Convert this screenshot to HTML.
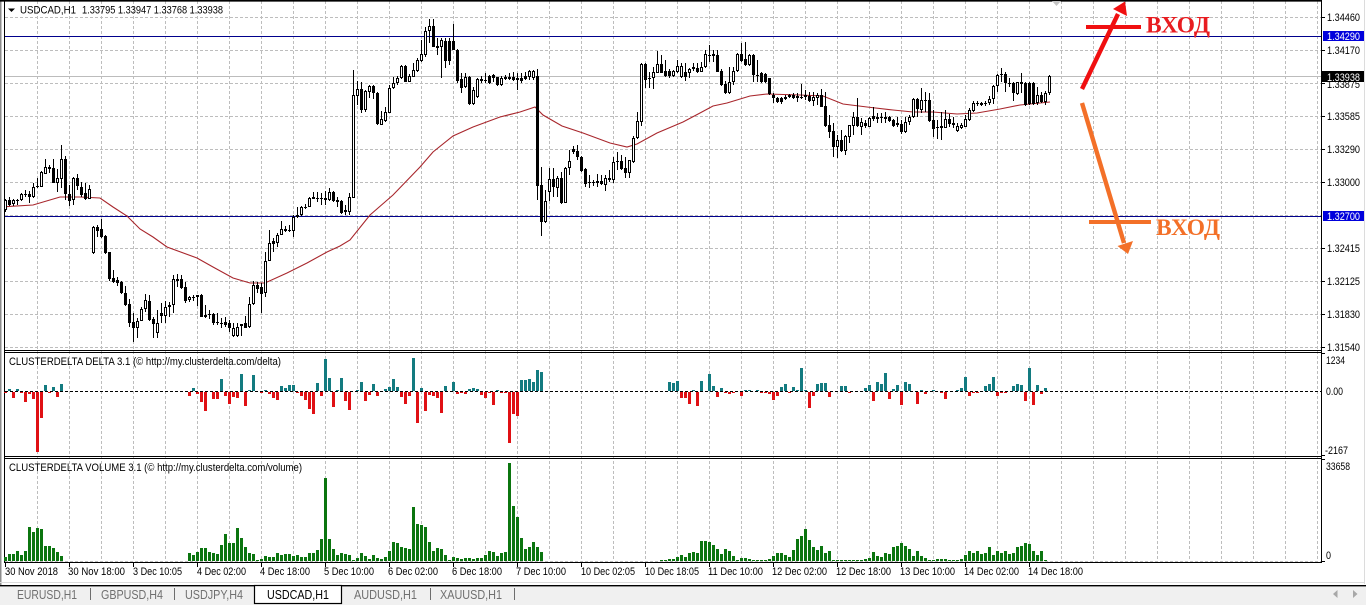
<!DOCTYPE html>
<html lang="en"><head><meta charset="utf-8"><title>USDCAD,H1</title>
<style>
html,body{margin:0;padding:0;background:#fff;width:1366px;height:607px;overflow:hidden}
svg{display:block}
text{font-family:"Liberation Sans",sans-serif;font-size:11px;fill:#000}
.t{font-size:12.5px;fill:#707070}
.v{font-family:"Liberation Serif",serif;font-weight:bold;font-size:23px}
</style></head><body>
<svg xmlns="http://www.w3.org/2000/svg" width="1366" height="607" viewBox="0 0 1366 607">
<rect width="1366" height="607" fill="#fff"/>
<!-- window edge -->
<rect x="0" y="0" width="1.5" height="586" fill="#8c8c8c"/>
<rect x="1364" y="0" width="1" height="584" fill="#dcdcdc"/>
<!-- grid -->
<g fill="none" stroke="#bdbdbd" stroke-width="1" stroke-dasharray="3 2">
<path d="M5 17.5H1321M5 50.5H1321M5 83.5H1321M5 116.5H1321M5 149.5H1321M5 182.5H1321M5 215.5H1321M5 248.5H1321M5 281.5H1321M5 314.5H1321M5 347.5H1321M5 561.5H1321"/>
<path d="M37.5 1V561M69.5 1V561M101.5 1V561M133.5 1V561M165.5 1V561M197.5 1V561M229.5 1V561M261.5 1V561M293.5 1V561M325.5 1V561M357.5 1V561M389.5 1V561M421.5 1V561M453.5 1V561M485.5 1V561M517.5 1V561M549.5 1V561M581.5 1V561M613.5 1V561M645.5 1V561M677.5 1V561M709.5 1V561M741.5 1V561M773.5 1V561M805.5 1V561M837.5 1V561M869.5 1V561M901.5 1V561M933.5 1V561M965.5 1V561M997.5 1V561M1029.5 1V561M1061.5 1V561M1093.5 1V561M1125.5 1V561M1157.5 1V561M1189.5 1V561M1221.5 1V561M1253.5 1V561M1285.5 1V561M1317.5 1V561"/>
</g>
<!-- price level lines -->
<path d="M5 76.5H1321" stroke="#bcbcbc" fill="none"/>
<path d="M5 36.5H1322M5 216.5H1322" stroke="#00008c" fill="none"/>
<!-- moving average -->
<path fill="none" stroke="#a8262c" stroke-width="1.1" d="M5 206.7L33 205L60 197L80 197L100 198L113 207L127 216L140 229L153 237L167 247L197 258L213 267L233 278L250 283L265 283L287 273L307 263L327 252L340 246L350 240L370 215L393 195L420 167L433 152L453 136L473 127L500 117L520 112L535 107L543 115L562 126L583 133L610 143L627 147L637 144L657 133L683 122L700 113L713 106L727 103L750 96L767 94L800 95L823 96L843 104L867 107L893 110L913 112L933 112L957 114L977 113L1000 109L1020 105L1050 102"/>
<!-- candle wicks -->
<path fill="none" stroke="#000" stroke-width="1" d="M5.5 199V212M9.5 197V206M13.5 199V206M17.5 199V205M21.5 193V201M25.5 190V197M29.5 191V203M33.5 183V198M37.5 178V188M41.5 171V187M45.5 159V174M49.5 165V173M53.5 159V183M57.5 169V192M61.5 145V188M65.5 156V200M69.5 185V206M73.5 177V205M77.5 174V190M81.5 182V197M85.5 183V200M89.5 185V199M93.5 226V254M97.5 225V237M101.5 219V238M105.5 235V254M109.5 252V281M113.5 270V283M117.5 277V286M121.5 281V294M125.5 286V306M129.5 299V327M133.5 313V342M137.5 318V338M141.5 307V321M145.5 294V312M149.5 295V321M153.5 317V338M157.5 310V338M161.5 303V323M165.5 301V323M169.5 302V317M173.5 275V313M177.5 274V287M181.5 275V289M185.5 282V303M189.5 296V302M193.5 295V301M197.5 295V306M201.5 294V317M205.5 305V318M209.5 310V319M213.5 313V325M217.5 313V325M221.5 318V328M225.5 317V327M229.5 320V332M233.5 323V337M237.5 323V337M241.5 324V336M245.5 316V328M249.5 297V328M253.5 281V305M257.5 282V293M261.5 283V313M265.5 252V297M269.5 230V261M273.5 238V252M277.5 233V247M281.5 221V235M285.5 226V232M289.5 225V232M293.5 215V237M297.5 207V218M301.5 206V216M305.5 204V209M309.5 197V207M313.5 192V199M317.5 192V202M321.5 193V205M325.5 191V205M329.5 188V201M333.5 191V202M337.5 197V207M341.5 200V214M345.5 205V215M349.5 193V215M353.5 70V198M357.5 81V105M361.5 82V113M365.5 90V112M369.5 85V98M373.5 85V99M377.5 92V125M381.5 111V125M385.5 107V122M389.5 85V113M393.5 77V89M397.5 76V85M401.5 65V79M405.5 65V82M409.5 74V82M413.5 63V77M417.5 58V72M421.5 40V62M425.5 27V57M429.5 19V43M433.5 19V47M437.5 38V55M441.5 38V78M445.5 38V68M449.5 38V65M453.5 24V50M457.5 49V83M461.5 73V93M465.5 73V88M469.5 76V105M473.5 87V105M477.5 78V98M481.5 76V83M485.5 73V83M489.5 75V84M493.5 74V82M497.5 77V86M501.5 76V86M505.5 75V80M509.5 73V80M513.5 72V81M517.5 73V90M521.5 73V83M525.5 72V80M529.5 70V80M533.5 70V80M537.5 69V200M541.5 167V236M545.5 190V223M549.5 168V201M553.5 168V197M557.5 176V197M561.5 172V204M565.5 167V203M569.5 150V175M573.5 146V154M577.5 145V160M581.5 156V172M585.5 168V187M589.5 175V188M593.5 180V186M597.5 174V187M601.5 175V185M605.5 175V191M609.5 170V182M613.5 157V183M617.5 152V170M621.5 155V170M625.5 157V178M629.5 160V178M633.5 136V163M637.5 112V139M641.5 63V126M645.5 63V88M649.5 72V88M653.5 67V89M657.5 51V73M661.5 55V73M665.5 60V77M669.5 69V78M673.5 70V77M677.5 60V73M681.5 63V78M685.5 63V81M689.5 68V78M693.5 63V71M697.5 63V73M701.5 62V72M705.5 50V68M709.5 45V62M713.5 50V62M717.5 50V72M721.5 69V86M725.5 81V94M729.5 67V94M733.5 67V85M737.5 53V72M741.5 43V62M745.5 42V66M749.5 54V66M753.5 54V82M757.5 60V82M761.5 72V83M765.5 73V83M769.5 78V95M773.5 93V103M777.5 97V103M781.5 97V104M785.5 95V100M789.5 94V98M793.5 93V99M797.5 93V102M801.5 84V99M805.5 90V100M809.5 92V102M813.5 92V106M817.5 93V105M821.5 89V107M825.5 92V127M829.5 115V138M833.5 123V157M837.5 135V158M841.5 130V152M845.5 135V155M849.5 125V143M853.5 112V135M857.5 98V127M861.5 118V135M865.5 120V128M869.5 117V127M873.5 107V121M877.5 113V123M881.5 113V123M885.5 112V123M889.5 116V122M893.5 119V127M897.5 117V127M901.5 120V134M905.5 117V133M909.5 115V125M913.5 98V118M917.5 98V117M921.5 88V113M925.5 92V112M929.5 93V122M933.5 110V137M937.5 120V139M941.5 112V140M945.5 110V128M949.5 114V127M953.5 117V128M957.5 123V132M961.5 123V129M965.5 115V127M969.5 108V121M973.5 101V112M977.5 101V106M981.5 102V106M985.5 101V106M989.5 96V105M993.5 85V104M997.5 74V92M1001.5 68V82M1005.5 72V92M1009.5 78V87M1013.5 82V101M1017.5 82V95M1021.5 73V93M1025.5 82V106M1029.5 82V105M1033.5 82V105M1037.5 87V105M1041.5 92V103M1045.5 91V105M1049.5 75V95"/>
<!-- candle bodies -->
<path fill="none" stroke="#000" stroke-width="3" d="M5.5 200V210M9.5 200V205M13.5 200V204M17.5 200V201M21.5 194V200M25.5 194V195M29.5 194V197M33.5 187V197M37.5 186V187M41.5 172V187M45.5 167V174M49.5 167V169M53.5 168V183M57.5 178V183M61.5 159V179M65.5 159V194M69.5 194V201M73.5 178V200M77.5 178V186M81.5 187V195M85.5 193V199M89.5 189V199M93.5 227V253M97.5 227V231M101.5 229V237M105.5 236V253M109.5 252V279M113.5 278V282M117.5 280V283M121.5 282V293M125.5 293V305M129.5 304V323M133.5 322V328M137.5 321V328M141.5 309V321M145.5 300V309M149.5 301V320M153.5 319V324M157.5 323V333M161.5 313V316M165.5 307V316M169.5 305V307M173.5 279V305M177.5 279V281M181.5 279V288M185.5 287V301M189.5 297V300M193.5 297V298M197.5 295V297M201.5 295V317M205.5 315V317M209.5 314V315M213.5 314V323M217.5 322V323M221.5 323V324M225.5 322V325M229.5 323V328M233.5 328V336M237.5 327V336M241.5 324V326M245.5 323V328M249.5 304V327M253.5 285V304M257.5 285V289M261.5 287V294M265.5 261V293M269.5 243V261M273.5 241V244M277.5 235V243M281.5 229V235M285.5 229V231M289.5 230V231M293.5 217V231M297.5 215V217M301.5 207V215M305.5 207V208M309.5 198V207M313.5 197V199M317.5 198V199M321.5 198V199M325.5 198V200M329.5 192V200M333.5 192V201M337.5 200V202M341.5 201V213M345.5 210V212M349.5 197V212M353.5 95V198M357.5 89V96M361.5 89V110M365.5 91V110M369.5 86V92M373.5 86V93M377.5 93V124M381.5 119V125M385.5 112V121M389.5 88V113M393.5 83V88M397.5 78V83M401.5 66V78M405.5 66V82M409.5 76V82M413.5 70V77M417.5 60V71M421.5 54V61M425.5 31V55M429.5 26V31M433.5 26V47M437.5 46V48M441.5 40V47M445.5 41V61M449.5 41V61M453.5 41V50M457.5 50V81M461.5 79V88M465.5 77V87M469.5 77V104M473.5 90V104M477.5 79V97M481.5 79V81M485.5 80V81M489.5 76V83M493.5 75V78M497.5 77V85M501.5 78V85M505.5 77V79M509.5 77V79M513.5 77V80M517.5 78V80M521.5 78V81M525.5 76V79M529.5 71V77M533.5 71V78M537.5 76V186M541.5 185V222M545.5 201V222M549.5 179V192M553.5 179V187M557.5 178V188M561.5 178V203M565.5 168V203M569.5 161V168M573.5 149V152M577.5 151V157M581.5 157V171M585.5 169V184M589.5 182V183M593.5 182V183M597.5 181V183M601.5 181V184M605.5 178V185M609.5 178V180M613.5 162V180M617.5 161V162M621.5 161V169M625.5 168V173M629.5 160V173M633.5 138V162M637.5 121V138M641.5 64V122M645.5 64V80M649.5 78V79M653.5 72V78M657.5 64V73M661.5 64V73M665.5 71V76M669.5 71V76M673.5 71V76M677.5 66V72M681.5 66V77M685.5 72V77M689.5 69V73M693.5 67V69M697.5 68V72M701.5 67V72M705.5 54V67M709.5 55V56M713.5 54V56M717.5 55V72M721.5 71V85M725.5 84V93M729.5 82V93M733.5 71V82M737.5 54V71M741.5 54V61M745.5 59V65M749.5 55V65M753.5 55V75M757.5 75V76M761.5 73V82M765.5 74V82M769.5 78V94M773.5 95V98M777.5 98V102M781.5 98V102M785.5 97V99M789.5 95V97M793.5 95V98M797.5 96V98M801.5 97V98M805.5 95V97M809.5 96V101M813.5 97V101M817.5 95V98M821.5 95V107M825.5 106V126M829.5 125V132M833.5 131V147M837.5 140V147M841.5 140V151M845.5 136V151M849.5 125V137M853.5 117V126M857.5 117V126M861.5 122V127M865.5 123V126M869.5 118V127M873.5 116V119M877.5 117V119M881.5 117V118M885.5 117V119M889.5 117V121M893.5 120V126M897.5 123V125M901.5 124V132M905.5 122V132M909.5 117V122M913.5 99V117M917.5 99V109M921.5 100V110M925.5 100V101M929.5 100V121M933.5 120V129M937.5 127V128M941.5 126V128M945.5 119V128M949.5 119V124M953.5 123V125M957.5 126V131M961.5 125V128M965.5 119V127M969.5 110V120M973.5 103V111M977.5 103V104M981.5 103V105M985.5 103V104M989.5 99V103M993.5 86V99M997.5 75V86M1001.5 74V75M1005.5 74V83M1009.5 83V84M1013.5 83V93M1017.5 82V94M1021.5 82V84M1025.5 83V105M1029.5 83V104M1033.5 83V104M1037.5 95V103M1041.5 95V102M1045.5 93V102M1049.5 76V93"/>
<!-- hollow candle interiors -->
<path fill="none" stroke="#fff" stroke-width="1" d="M5.5 201V209M13.5 201V203M21.5 195V199M33.5 188V196M41.5 173V186M45.5 168V173M57.5 179V182M61.5 160V178M73.5 179V199M89.5 190V198M93.5 228V252M137.5 322V327M141.5 310V320M145.5 301V308M157.5 324V332M165.5 308V315M173.5 280V304M189.5 298V299M233.5 329V335M237.5 328V335M249.5 305V326M253.5 286V303M265.5 262V292M269.5 244V260M277.5 236V242M281.5 230V234M293.5 218V230M301.5 208V214M309.5 199V206M329.5 193V199M349.5 198V211M353.5 96V197M357.5 90V95M365.5 92V109M369.5 87V91M381.5 120V124M385.5 113V120M389.5 89V112M393.5 84V87M397.5 79V82M401.5 67V77M409.5 77V81M413.5 71V76M417.5 61V70M421.5 55V60M425.5 32V54M429.5 27V30M441.5 41V46M465.5 78V86M473.5 91V103M477.5 80V96M501.5 79V84M517.5 79V79M529.5 72V76M533.5 72V77M545.5 202V221M549.5 180V191M557.5 179V187M565.5 169V202M569.5 162V167M605.5 179V184M613.5 163V179M629.5 161V172M633.5 139V161M637.5 122V137M641.5 65V121M653.5 73V77M657.5 65V72M673.5 72V75M677.5 67V71M681.5 67V76M689.5 70V72M701.5 68V71M705.5 55V66M749.5 56V64M729.5 83V92M733.5 72V81M737.5 55V70M785.5 98V98M813.5 98V100M817.5 96V97M837.5 141V146M845.5 137V150M849.5 126V136M853.5 118V125M861.5 123V126M869.5 119V126M905.5 123V131M909.5 118V121M913.5 100V116M921.5 101V109M945.5 120V127M957.5 127V130M961.5 126V127M965.5 120V126M969.5 111V119M973.5 104V110M989.5 100V102M993.5 87V98M997.5 76V85M1017.5 83V93M1037.5 96V102M1045.5 94V101M1049.5 77V92"/>
<!-- pane frame -->
<g fill="none" stroke="#000" stroke-width="1">
<path d="M4.5 0.5H1321.5V562.5H4.5Z"/>
<path d="M4 350.5H1322M4 352.5H1322M4 456.5H1322M4 458.5H1322"/>
<path d="M5.5 563V567M69.5 563V567M133.5 563V567M197.5 563V567M261.5 563V567M325.5 563V567M389.5 563V567M453.5 563V567M517.5 563V567M581.5 563V567M645.5 563V567M709.5 563V567M773.5 563V567M837.5 563V567M901.5 563V567M965.5 563V567M1029.5 563V567"/>
<path d="M1322 17.5h3M1322 50.5h3M1322 83.5h3M1322 116.5h3M1322 149.5h3M1322 182.5h3M1322 248.5h3M1322 281.5h3M1322 314.5h3M1322 347.5h3M1322 353.5h3M1322 455.5h3M1322 459.5h3M1322 561.5h3"/>
</g>
<path d="M0 0.8H1322" stroke="#000" stroke-width="1.6" fill="none"/>
<!-- delta histogram -->
<path fill="none" stroke="#137b80" stroke-width="3" d="M9.5 391v-2M17.5 391v-2M45.5 391v-6M53.5 391v-4M61.5 391v-7M193.5 391v-3M221.5 391v-12M241.5 391v-17M249.5 391v-1M253.5 391v-16M265.5 391v-1M281.5 391v-5M285.5 391v-3M289.5 391v-6M293.5 391v-6M317.5 391v-8M325.5 391v-32M329.5 391v-13M337.5 391v-1M341.5 391v-13M357.5 391v-1M361.5 391v-9M373.5 391v-7M385.5 391v-2M389.5 391v-4M393.5 391v-12M397.5 391v-4M413.5 391v-33M421.5 391v-3M445.5 391v-5M453.5 391v-9M469.5 391v-2M473.5 391v-3M477.5 391v-2M497.5 391v-1M521.5 391v-11M525.5 391v-11M529.5 391v-12M533.5 391v-9M537.5 391v-21M541.5 391v-19M669.5 391v-9M673.5 391v-8M677.5 391v-10M693.5 391v-1M701.5 391v-10M709.5 391v-17M713.5 391v-5M721.5 391v-3M745.5 391v-1M749.5 391v-1M757.5 391v-1M781.5 391v-4M785.5 391v-7M793.5 391v-4M797.5 391v-1M801.5 391v-23M805.5 391v-1M817.5 391v-7M821.5 391v-8M825.5 391v-8M841.5 391v-5M845.5 391v-5M865.5 391v-3M869.5 391v-6M877.5 391v-9M881.5 391v-7M885.5 391v-18M893.5 391v-2M897.5 391v-6M905.5 391v-9M909.5 391v-7M921.5 391v-1M933.5 391v-1M957.5 391v-1M961.5 391v-3M965.5 391v-14M985.5 391v-5M989.5 391v-7M993.5 391v-14M1013.5 391v-5M1017.5 391v-7M1021.5 391v-6M1029.5 391v-23M1037.5 391v-6M1045.5 391v-3"/>
<path fill="none" stroke="#e01014" stroke-width="3" d="M5.5 392v1M13.5 392v6M21.5 392v1M25.5 392v10M29.5 392v2M33.5 392v7M37.5 392v60M41.5 392v26M49.5 392v1M57.5 392v5M189.5 392v4M197.5 392v2M201.5 392v10M205.5 392v19M213.5 392v7M217.5 392v7M225.5 392v4M229.5 392v12M233.5 392v5M237.5 392v6M245.5 392v14M261.5 392v1M269.5 392v2M273.5 392v6M277.5 392v8M297.5 392v1M301.5 392v4M305.5 392v8M309.5 392v17M313.5 392v22M321.5 392v4M333.5 392v15M345.5 392v9M349.5 392v18M365.5 392v9M369.5 392v3M377.5 392v4M401.5 392v5M405.5 392v12M409.5 392v4M417.5 392v31M425.5 392v19M429.5 392v3M433.5 392v4M437.5 392v6M441.5 392v21M457.5 392v2M461.5 392v1M465.5 392v2M481.5 392v3M485.5 392v6M489.5 392v1M493.5 392v13M501.5 392v1M505.5 392v1M509.5 392v51M513.5 392v22M517.5 392v24M681.5 392v6M685.5 392v6M689.5 392v12M697.5 392v14M717.5 392v5M725.5 392v1M729.5 392v2M733.5 392v1M741.5 392v4M761.5 392v1M765.5 392v1M769.5 392v2M773.5 392v8M777.5 392v4M789.5 392v1M809.5 392v16M813.5 392v4M829.5 392v5M849.5 392v1M873.5 392v9M889.5 392v7M901.5 392v13M917.5 392v12M925.5 392v2M941.5 392v1M945.5 392v7M969.5 392v4M973.5 392v1M977.5 392v1M997.5 392v4M1001.5 392v1M1005.5 392v1M1025.5 392v9M1033.5 392v13M1041.5 392v2"/>
<path d="M5 391.5H1321" stroke="#000" stroke-width="1" stroke-dasharray="3 2" fill="none"/>
<!-- volume histogram -->
<path fill="none" stroke="#0b750f" stroke-width="3" d="M5.5 561v-4m4 4v-7m4 7v-7m4 7v-10m4 10v-6m4 6v-10m4 10v-34m4 34v-29m4 29v-33m4 33v-32m4 32v-15m4 15v-15m4 15v-13m4 13v-9m4 9v-5
M189.5 561v-8m4 8v-6m4 6v-9m4 9v-13m4 13v-13m4 13v-9m4 9v-8m4 8v-7m4 7v-16m4 16v-27m4 27v-18m4 18v-18m4 18v-33m4 33v-23m4 23v-14m4 14v-8m4 8v-7m4 7v-1m4 1v-2m4 2v-5m4 5v-4m4 4v-4m4 4v-8m4 8v-6m4 6v-7m4 7v-7m4 7v-5m4 5v-6m4 6v-4m4 4v-4m4 4v-8m4 8v-8m4 8v-11m4 11v-22m4 22v-83m4 83v-22m4 22v-12m4 12v-6m4 6v-8m4 8v-7m4 7v-6m4 6v-1m4 1v-3m4 3v-8m4 8v-5m4 5v-2m4 2v-6m4 6v-3m4 3v-2m4 2v-4m4 4v-10m4 10v-19m4 19v-18m4 18v-14m4 14v-13m4 13v-12m4 12v-54m4 54v-37m4 37v-36m4 36v-34m4 34v-19m4 19v-10m4 10v-13m4 13v-12m4 12v-6m4 6v-1m4 1v-4m4 4v-3m4 3v-2m4 2v-3m4 3v-3m4 3v-2m4 2v-3m4 3v-3m4 3v-6m4 6v-10m4 10v-9m4 9v-5m4 5v-8m4 8v-9m4 9v-98m4 98v-55m4 55v-44m4 44v-23m4 23v-12m4 12v-14m4 14v-19m4 19v-14m4 14v-9
M661.5 561v-1m4 1v-1m4 1v-2m4 2v-2m4 2v-4m4 4v-6m4 6v-4m4 4v-8m4 8v-9m4 9v-8m4 8v-20m4 20v-20m4 20v-19m4 19v-16m4 16v-12m4 12v-7m4 7v-12m4 12v-10m4 10v-5m4 5v-1m4 1v-3m4 3v-3m4 3v-2m4 2v-1m4 1v-1m4 1v-1m4 1v-1m4 1v-2m4 2v-5m4 5v-8m4 8v-8m4 8v-6m4 6v-4m4 4v-11m4 11v-22m4 22v-25m4 25v-32m4 32v-21m4 21v-14m4 14v-11m4 11v-15m4 15v-8m4 8v-10m4 10v-1m4 1v-1m4 1v-1m4 1v-1m4 1v-1m4 1v-1m4 1v-1m4 1v-1m4 1v-2m4 2v-3m4 3v-9m4 9v-5m4 5v-4m4 4v-8m4 8v-7m4 7v-14m4 14v-15m4 15v-18m4 18v-15m4 15v-12m4 12v-5m4 5v-10m4 10v-5m4 5v-3m4 3v-1m4 1v-1m4 1v-2m4 2v-2m4 2v-2m4 2v-1m4 1v-1m4 1v-1m4 1v-2m4 2v-6m4 6v-10m4 10v-8m4 8v-10m4 10v-7m4 7v-8m4 8v-14m4 14v-6m4 6v-10m4 10v-8m4 8v-10m4 10v-7m4 7v-8m4 8v-14m4 14v-15m4 15v-18m4 18v-17m4 17v-10m4 10v-6m4 6v-10m4 10v-1"/>
<!-- drawn arrows -->
<path d="M1082 89L1118 14" stroke="#f00f10" stroke-width="4.4" fill="none"/>
<path d="M1125 1.5L1113 9L1127 16Z" fill="#f00f10"/>
<rect x="1086" y="25" width="55" height="4" fill="#f00f10"/>
<path d="M1082 103L1124 243" stroke="#f37028" stroke-width="4.4" fill="none"/>
<path d="M1128 254L1117.5 246L1133 241Z" fill="#f37028"/>
<rect x="1089" y="220" width="62" height="4" fill="#f37028"/>
<text class="v" x="1146" y="32.5" textLength="64" lengthAdjust="spacingAndGlyphs" style="fill:#e81c20">ВХОД</text>
<text class="v" x="1156" y="235" textLength="64" lengthAdjust="spacingAndGlyphs" style="fill:#f37028">ВХОД</text>
<path d="M1052 1L1061 1L1056.5 6Z" fill="#c4c4c4"/>
<!-- legends -->
<path d="M8 8.5H15L11.5 12Z" fill="#000"/>
<text x="20" y="13.5" textLength="56" lengthAdjust="spacingAndGlyphs">USDCAD,H1</text>
<text x="82" y="13.5" textLength="141" lengthAdjust="spacingAndGlyphs">1.33795 1.33947 1.33768 1.33938</text>
<text x="9" y="365" textLength="272" lengthAdjust="spacingAndGlyphs">CLUSTERDELTA DELTA 3.1 (© http://my.clusterdelta.com/delta)</text>
<text x="9" y="471" textLength="293" lengthAdjust="spacingAndGlyphs">CLUSTERDELTA VOLUME 3.1 (© http://my.clusterdelta.com/volume)</text>
<!-- price axis -->
<g>
<text x="1327" y="21" textLength="33" lengthAdjust="spacingAndGlyphs">1.34460</text>
<text x="1327" y="54" textLength="33" lengthAdjust="spacingAndGlyphs">1.34170</text>
<text x="1327" y="88" textLength="33" lengthAdjust="spacingAndGlyphs">1.33875</text>
<text x="1327" y="120" textLength="33" lengthAdjust="spacingAndGlyphs">1.33585</text>
<text x="1327" y="153" textLength="33" lengthAdjust="spacingAndGlyphs">1.33290</text>
<text x="1327" y="186" textLength="33" lengthAdjust="spacingAndGlyphs">1.33000</text>
<text x="1327" y="252" textLength="33" lengthAdjust="spacingAndGlyphs">1.32415</text>
<text x="1327" y="285" textLength="33" lengthAdjust="spacingAndGlyphs">1.32125</text>
<text x="1327" y="318" textLength="33" lengthAdjust="spacingAndGlyphs">1.31830</text>
<text x="1327" y="351" textLength="33" lengthAdjust="spacingAndGlyphs">1.31540</text>
<rect x="1323" y="31" width="41" height="10" fill="#0000dc"/>
<text x="1327" y="40" textLength="33" lengthAdjust="spacingAndGlyphs" style="fill:#fff">1.34290</text>
<rect x="1323" y="211" width="41" height="10" fill="#0000dc"/>
<text x="1327" y="220" textLength="33" lengthAdjust="spacingAndGlyphs" style="fill:#fff">1.32700</text>
<rect x="1322" y="71" width="42" height="11" fill="#000"/>
<text x="1327" y="81" textLength="33" lengthAdjust="spacingAndGlyphs" style="fill:#fff">1.33938</text>
<text x="1326" y="364" textLength="19" lengthAdjust="spacingAndGlyphs">1234</text>
<text x="1326" y="395" textLength="17" lengthAdjust="spacingAndGlyphs">0.00</text>
<text x="1325" y="454" textLength="23" lengthAdjust="spacingAndGlyphs">-2167</text>
<text x="1326" y="470" textLength="24" lengthAdjust="spacingAndGlyphs">33658</text>
<text x="1326" y="559" textLength="5" lengthAdjust="spacingAndGlyphs">0</text>
</g>
<!-- time axis -->
<g>
<text x="5" y="575" textLength="53" lengthAdjust="spacingAndGlyphs">30 Nov 2018</text>
<text x="68" y="575" textLength="57" lengthAdjust="spacingAndGlyphs">30 Nov 18:00</text>
<text x="133" y="575" textLength="49" lengthAdjust="spacingAndGlyphs">3 Dec 10:05</text>
<text x="197" y="575" textLength="49" lengthAdjust="spacingAndGlyphs">4 Dec 02:00</text>
<text x="260" y="575" textLength="50" lengthAdjust="spacingAndGlyphs">4 Dec 18:00</text>
<text x="324" y="575" textLength="50" lengthAdjust="spacingAndGlyphs">5 Dec 10:00</text>
<text x="388" y="575" textLength="50" lengthAdjust="spacingAndGlyphs">6 Dec 02:00</text>
<text x="452" y="575" textLength="50" lengthAdjust="spacingAndGlyphs">6 Dec 18:00</text>
<text x="516" y="575" textLength="50" lengthAdjust="spacingAndGlyphs">7 Dec 10:00</text>
<text x="581" y="575" textLength="54" lengthAdjust="spacingAndGlyphs">10 Dec 02:05</text>
<text x="645" y="575" textLength="54" lengthAdjust="spacingAndGlyphs">10 Dec 18:05</text>
<text x="708" y="575" textLength="55" lengthAdjust="spacingAndGlyphs">11 Dec 10:00</text>
<text x="772" y="575" textLength="55" lengthAdjust="spacingAndGlyphs">12 Dec 02:00</text>
<text x="836" y="575" textLength="55" lengthAdjust="spacingAndGlyphs">12 Dec 18:00</text>
<text x="900" y="575" textLength="55" lengthAdjust="spacingAndGlyphs">13 Dec 10:00</text>
<text x="964" y="575" textLength="55" lengthAdjust="spacingAndGlyphs">14 Dec 02:00</text>
<text x="1028" y="575" textLength="55" lengthAdjust="spacingAndGlyphs">14 Dec 18:00</text>
</g>
<!-- tab bar -->
<rect x="0" y="582" width="1364" height="1" fill="#dcdcdc"/>
<rect x="0" y="585" width="1366" height="20" fill="#f0f0f0"/>
<rect x="0" y="585" width="1366" height="1.4" fill="#000"/>
<rect x="254.5" y="585.5" width="87" height="18" fill="#fff" stroke="#000" stroke-width="1.2"/>
<path d="M90.5 588V600M174.5 588V600M430.5 588V600M514.5 588V600" stroke="#6e6e6e" fill="none"/>
<text class="t" x="17" y="599" textLength="60" lengthAdjust="spacingAndGlyphs">EURUSD,H1</text>
<text class="t" x="101" y="599" textLength="62" lengthAdjust="spacingAndGlyphs">GBPUSD,H4</text>
<text class="t" x="185" y="599" textLength="58" lengthAdjust="spacingAndGlyphs">USDJPY,H4</text>
<text class="t" x="267" y="599" textLength="62" lengthAdjust="spacingAndGlyphs" style="fill:#000">USDCAD,H1</text>
<text class="t" x="354" y="599" textLength="63" lengthAdjust="spacingAndGlyphs">AUDUSD,H1</text>
<text class="t" x="440" y="599" textLength="62" lengthAdjust="spacingAndGlyphs">XAUUSD,H1</text>
<path d="M1337.5 590V598L1333 594Z M1353 590V598L1357.5 594Z" fill="#a8a8a8"/>
</svg>
</body></html>
